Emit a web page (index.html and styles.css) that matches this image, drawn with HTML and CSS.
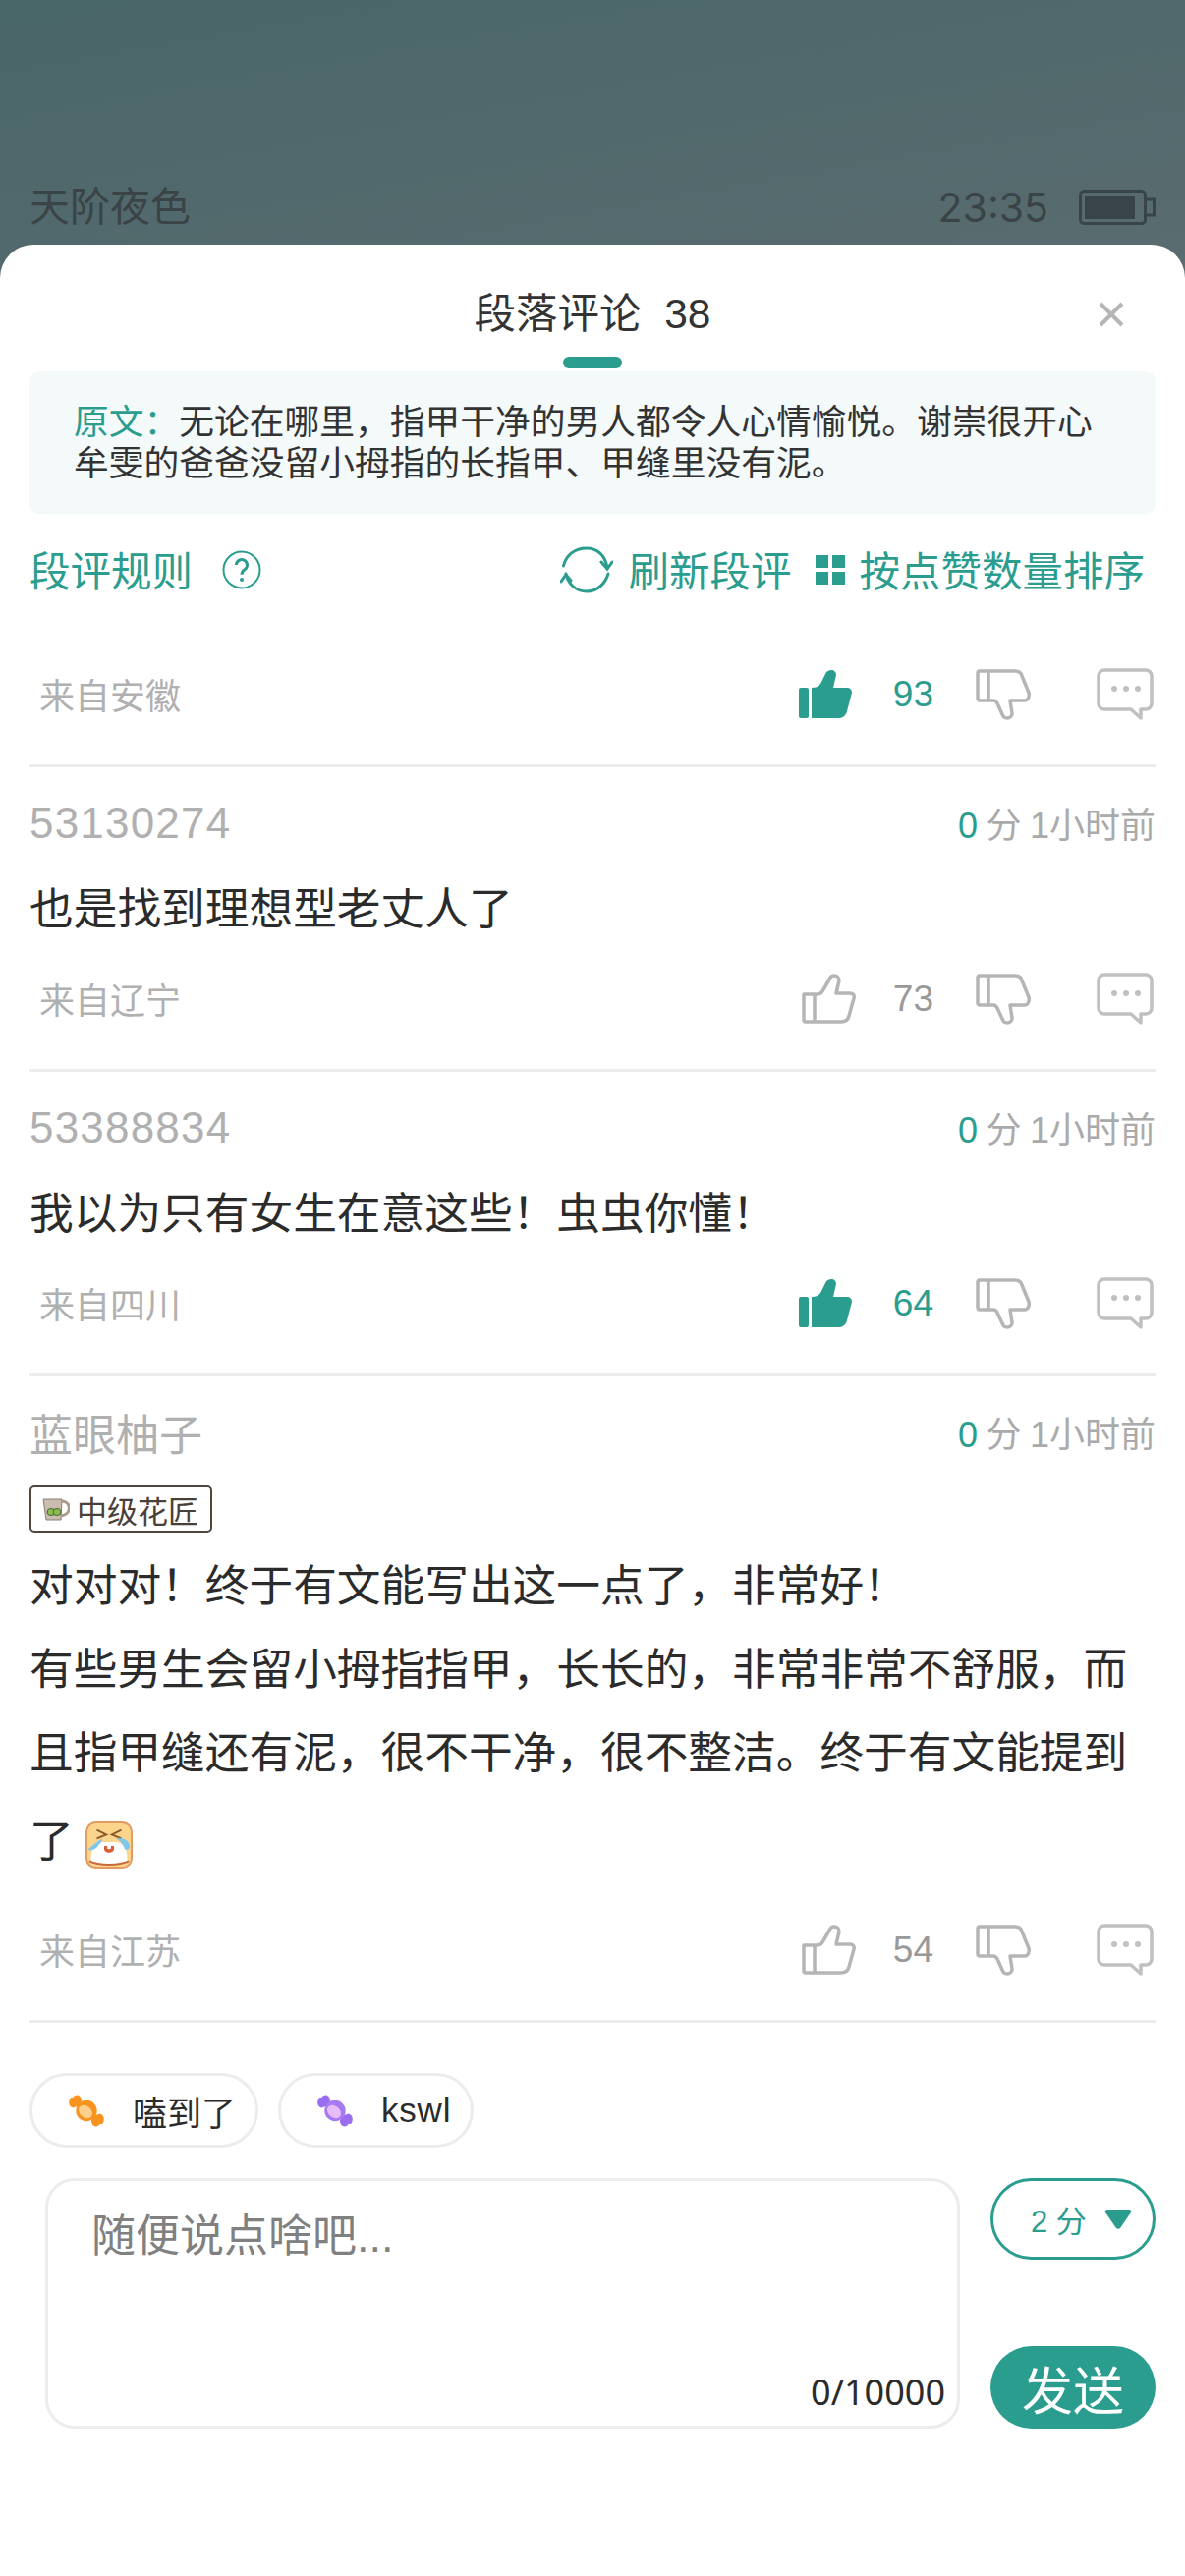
FILE: index.html
```html
<!DOCTYPE html>
<html lang="zh-CN">
<head>
    <meta charset="UTF-8">
    <title>段落评论</title>
    <link rel="stylesheet" href="styles.css">
</head>
<body>
    <svg class="sprites" width="0" height="0">
        <symbol id="thumb-fill" viewBox="0 0 60 52">
            <path d="M13 19c4 0 7-1 9-4L27 5c1-3 4-4 6-4 3 0 5 2 5 5l-3 13h14c3 0 5 2 5 5l-5 19c-1 4-4 7-8 7H13Z"/>
            <rect x="0" y="19" width="10" height="31" rx="2"/>
        </symbol>
        <symbol id="thumb-line" viewBox="0 0 60 52">
            <path d="M5 21h13c3 0 5-1 6-3L31 6c1-3 3-4 5-4 3 0 5 2 5 5l-3 13h14c3 0 5 2 4 5l-5 18c-1 4-4 6-8 6H7a2 2 0 0 1-2-2V21Z M16 21v28" fill="none" stroke-width="3.500" stroke-linejoin="round"/>
        </symbol>
        <symbol id="thumb-down" viewBox="0 0 60 52">
            <path d="M2 4a2 2 0 0 1 2-2h36c3 0 6 1 7 5l7 17c1 4-1 8-4 8H35l2 13c0 3-2 5-5 5-2 0-4-1-5-4l-5-11c-1-2-2-3-4-3H4a2 2 0 0 1-2-2Z M13 2v30" fill="none" stroke-width="3.500" stroke-linejoin="round"/>
        </symbol>
        <symbol id="speech" viewBox="0 0 60 54">
            <path d="M8 2h42a6 6 0 0 1 6 6v28a6 6 0 0 1-6 6h-5v9l-10-9H8a6 6 0 0 1-6-6V8a6 6 0 0 1 6-6Z" fill="none" stroke-width="3.500" stroke-linejoin="round"/>
            <circle cx="18" cy="21" r="3" stroke="none"/><circle cx="30" cy="21" r="3" stroke="none"/><circle cx="42" cy="21" r="3" stroke="none"/>
        </symbol>
    </svg>

    <header class="reader-bar">
        <span>天阶夜色</span>
        <div class="reader-status">
            <span class="clock">23:35</span>
            <svg width="78" height="36" viewBox="0 0 78 36">
                <rect x="1.500" y="1.500" width="66" height="33" rx="4" fill="none" stroke="#39444a" stroke-width="3"/>
                <rect x="6" y="6" width="51" height="24" fill="#39444a"/>
                <path d="M69 10h7.500v16H69" fill="none" stroke="#39444a" stroke-width="3"/>
            </svg>
        </div>
    </header>

    <main class="sheet">
        <div class="sheet-title">
            <h1>段落评论&nbsp;&nbsp;38</h1>
            <svg class="close" width="26" height="26" viewBox="0 0 26 26">
                <path d="M2 2l22 22M24 2L2 24" stroke="#b5b5b5" stroke-width="4"/>
            </svg>
        </div>
        <div class="tab-mark"></div>

        <p class="quote"><span class="quote-label">原文：</span>无论在哪里，指甲干净的男人都令人心情愉悦。谢崇很开心牟雯的爸爸没留小拇指的长指甲、甲缝里没有泥。</p>

        <div class="tools">
            <div class="tool">
                <span>段评规则</span>
                <svg width="40" height="40" viewBox="0 0 40 40">
                    <circle cx="20" cy="20" r="18.500" fill="none" stroke="#2a9d8f" stroke-width="2"/>
                    <path d="M14.500 15a5.500 5.500 0 1 1 8.500 4.700c-2 1.300-3 2.300-3 5" fill="none" stroke="#2a9d8f" stroke-width="3"/>
                    <circle cx="20" cy="30" r="2" fill="#2a9d8f"/>
                </svg>
            </div>
            <div class="tool-group">
                <div class="tool refresh">
                    <svg width="54" height="48" viewBox="0 0 54 48" fill="none" stroke="#2a9d8f" stroke-width="3" stroke-linecap="round">
                        <path d="M3.500 20C6 9 15 2 27 2c11 0 19 7 21 20"/>
                        <path d="M49 28c-3 10-11 18-22 18-11 0-19-8-21-18"/>
                        <path d="M42 16l6 7 5-7M1 36l5-7 5 6"/>
                    </svg>
                    <span>刷新段评</span>
                </div>
                <div class="tool sort">
                    <svg width="30" height="30" viewBox="0 0 30 30" fill="#2a9d8f">
                        <rect width="13" height="13"/><rect x="17" width="13" height="13"/>
                        <rect y="17" width="13" height="13"/><rect x="17" y="17" width="13" height="13"/>
                    </svg>
                    <span>按点赞数量排序</span>
                </div>
            </div>
        </div>

        <section class="comment first">
            <div class="comment-foot">
                <span class="place">来自安徽</span>
                <div class="actions">
                    <svg class="icon liked"><use href="#thumb-fill"/></svg><span class="count liked-count">93</span>
                    <svg class="icon dislike"><use href="#thumb-down"/></svg>
                    <svg class="icon-reply"><use href="#speech"/></svg>
                </div>
            </div>
        </section>

        <section class="comment">
            <div class="comment-head">
                <span class="author num">53130274</span>
                <span class="meta"><b>0</b> 分 1小时前</span>
            </div>
            <p class="comment-text">也是找到理想型老丈人了</p>
            <div class="comment-foot">
                <span class="place">来自辽宁</span>
                <div class="actions">
                    <svg class="icon unliked"><use href="#thumb-line"/></svg><span class="count">73</span>
                    <svg class="icon dislike"><use href="#thumb-down"/></svg>
                    <svg class="icon-reply"><use href="#speech"/></svg>
                </div>
            </div>
        </section>

        <section class="comment">
            <div class="comment-head">
                <span class="author num">53388834</span>
                <span class="meta"><b>0</b> 分 1小时前</span>
            </div>
            <p class="comment-text">我以为只有女生在意这些！虫虫你懂！</p>
            <div class="comment-foot">
                <span class="place">来自四川</span>
                <div class="actions">
                    <svg class="icon liked"><use href="#thumb-fill"/></svg><span class="count liked-count">64</span>
                    <svg class="icon dislike"><use href="#thumb-down"/></svg>
                    <svg class="icon-reply"><use href="#speech"/></svg>
                </div>
            </div>
        </section>

        <section class="comment">
            <div class="comment-head">
                <span class="author">蓝眼柚子</span>
                <span class="meta"><b>0</b> 分 1小时前</span>
            </div>
            <div class="badge">
                <svg width="28" height="24" viewBox="0 0 28 24">
                    <path d="M1 2h19l-1 21H4Z" fill="#cbbcb0" stroke="#8d7f75"/>
                    <path d="M20 4c10 0 10 14-1 15" fill="none" stroke="#a89a8f" stroke-width="3"/>
                    <ellipse cx="9" cy="15" rx="4" ry="3.500" fill="#8dbb52" stroke="#3f6a2a"/>
                    <ellipse cx="15" cy="15" rx="4" ry="3.500" fill="#8dbb52" stroke="#3f6a2a"/>
                </svg>
                <span>中级花匠</span>
            </div>
            <p class="comment-text long">对对对！终于有文能写出这一点了，非常好！<br>有些男生会留小拇指指甲，长长的，非常非常不舒服，而且指甲缝还有泥，很不干净，很不整洁。终于有文能提到了
                <svg class="sticker" width="48" height="48" viewBox="0 0 50 50">
                    <rect x="1" y="1" width="48" height="48" rx="10" fill="#fcd48c" stroke="#e29a62" stroke-width="2"/>
                    <path d="M6 42c-1-10 2-16 10-20l18 0c8 3 11 10 10 20-6 4-32 4-38 0Z" fill="#fff"/>
                    <path d="M4 42c10 5 32 5 42 0" fill="none" stroke="#c9683a" stroke-width="2"/>
                    <path d="M12 9l10 5-10 4M38 9l-10 5 10 4" fill="none" stroke="#8a5a2a" stroke-width="2"/>
                    <path d="M18 18c-5 2-10 8-16 12 6 2 10-2 12-5 2-2 4-4 4-7ZM32 18c4 2 8 6 9 10 1 3 5 3 6-1 0-4-3-8-8-9Z" fill="#7fc8ea"/>
                    <path d="M20 26h10c1 5-1 7-5 7s-6-2-5-7Z" fill="#dc5a34"/>
                    <path d="M23 26v2c0 2 4 2 4 0v-2" fill="#fff"/>
                </svg>
            </p>
            <div class="comment-foot">
                <span class="place">来自江苏</span>
                <div class="actions">
                    <svg class="icon unliked"><use href="#thumb-line"/></svg><span class="count">54</span>
                    <svg class="icon dislike"><use href="#thumb-down"/></svg>
                    <svg class="icon-reply"><use href="#speech"/></svg>
                </div>
            </div>
        </section>

        <div class="chips">
            <div class="chip">
                <svg width="38" height="33" viewBox="0 0 38 34">
                    <path d="M10 12L5 14C1 13 0 9 1 6c0-3 3-3 4-3 1-2 4-3 6-2 2 1 3 4 3 6ZM28 22l5-2c4 1 5 5 4 8 0 3-3 3-4 3-1 2-4 3-6 2-2-1-3-4-3-6Z" fill="#f7931e"/>
                    <circle cx="19" cy="17" r="11" fill="#f7931e"/>
                    <ellipse cx="18" cy="18" rx="6" ry="8" fill="#fcd08c" transform="rotate(-50 18 18)"/>
                </svg>
                <span>嗑到了</span>
            </div>
            <div class="chip">
                <svg width="38" height="33" viewBox="0 0 38 34">
                    <path d="M10 12L5 14C1 13 0 9 1 6c0-3 3-3 4-3 1-2 4-3 6-2 2 1 3 4 3 6ZM28 22l5-2c4 1 5 5 4 8 0 3-3 3-4 3-1 2-4 3-6 2-2-1-3-4-3-6Z" fill="#9a6cf0"/>
                    <circle cx="19" cy="17" r="11" fill="#a57af2"/>
                    <ellipse cx="18" cy="18" rx="6" ry="8" fill="#e8bcf8" transform="rotate(-50 18 18)"/>
                </svg>
                <span class="chip-latin">kswl</span>
            </div>
        </div>

        <div class="composer">
            <div class="input-box">
                <span class="placeholder">随便说点啥吧...</span>
                <span class="counter">0/10000</span>
            </div>
            <div class="composer-side">
                <div class="score-pick">
                    <span>2 分</span>
                    <svg width="28" height="22" viewBox="0 0 28 22"><path d="M3 1h22c2 0 3 2 2 3L16 20c-1 1-3 1-4 0L1 4C0 3 1 1 3 1Z" fill="#2a9d8f"/></svg>
                </div>
                <div class="send">发送</div>
            </div>
        </div>
    </main>
</body>
</html>
```

FILE: styles.css
```css
* {
    box-sizing: border-box;
}
body {
    margin: 0;
    width: 1206px;
    height: 2622px;
    overflow: hidden;
    background-color: #fff;
    font-family: "Liberation Sans", "Noto Sans CJK SC", sans-serif;
    color: #2b2b2b;
}
h1, p {
    margin: 0;
    font-weight: normal;
}
.sprites {
    position: absolute;
}
.reader-bar {
    height: 283px;
    padding: 0 30px 39px;
    display: flex;
    justify-content: space-between;
    align-items: flex-end;
    background: linear-gradient(170deg, #496669, #5a6c70);
    color: #3a4446;
    font-size: 41px;
    line-height: 66px;
}
.reader-status {
    height: 66px;
    display: flex;
    align-items: center;
    gap: 31px;
}
.clock {
    font-family: Inter, "Liberation Sans", sans-serif;
}
.sheet {
    position: relative;
    height: 2373px;
    margin-top: -34px;
    padding: 0 30px;
    background-color: #fff;
    border-radius: 34px 34px 0 0;
}
.sheet-title {
    position: relative;
    height: 114px;
    padding-top: 46px;
    text-align: center;
}
.sheet-title h1 {
    font-size: 42.5px;
    line-height: 50px;
    color: #333;
}
.close {
    position: absolute;
    right: 32px;
    top: 58px;
}
.tab-mark {
    width: 60px;
    height: 12px;
    margin: 0 auto;
    background-color: #2a9d8f;
    border-radius: 6px;
}
.quote {
    height: 145px;
    margin-top: 3px;
    padding: 31px 50px 0 45px;
    background-color: #f4f9f9;
    border-radius: 10px;
    font-size: 35.75px;
    line-height: 42px;
    color: #333;
}
.quote-label {
    color: #2a9d8f;
}
.tools {
    height: 114px;
    display: flex;
    justify-content: space-between;
    align-items: center;
    color: #2a9d8f;
    font-size: 41.5px;
}
.tool, .tool-group {
    display: flex;
    align-items: center;
}
.tool span {
    margin-bottom: 3px;
}
.tool {
    gap: 30px;
}
.tool-group {
    gap: 25px;
    padding-right: 11px;
}
.refresh {
    gap: 15px;
}
.sort {
    gap: 14px;
}
.comment {
    padding-top: 33px;
    border-bottom: 3px solid #ececec;
}
.comment.first {
    height: 144px;
    padding-top: 40px;
}
.comment.first .comment-foot {
    margin-top: 0;
}
.comment-head {
    height: 48px;
    display: flex;
    justify-content: space-between;
    align-items: center;
}
.author {
    font-size: 44px;
    color: #b0b0b0;
}
.author.num {
    letter-spacing: 1.2px;
}
.meta {
    padding-bottom: 3px;
    font-size: 36px;
    word-spacing: -1.5px;
    color: #aaa;
}
.meta b {
    font-weight: normal;
    color: #2a9d8f;
}
.comment-text {
    margin-top: 21px;
    font-size: 44.7px;
    line-height: 85px;
    color: #2b2b2b;
}
.comment-text.long {
    margin-top: 12px;
    margin-bottom: 26px;
}
.sticker {
    vertical-align: middle;
    margin: 27px 0;
}
.comment-foot {
    height: 60px;
    margin: 19px 0 41px;
    display: flex;
    justify-content: space-between;
    align-items: center;
}
.place {
    padding: 0 0 3px 10px;
    font-size: 36px;
    color: #b0b0b0;
}
.actions {
    display: flex;
    align-items: center;
    height: 60px;
}
.icon {
    width: 60px;
    height: 52px;
}
.liked {
    fill: #2a9d8f;
}
.unliked {
    stroke: #b5b5b5;
}
.dislike {
    margin-left: 43px;
    stroke: #b5b5b5;
}
.icon-reply {
    width: 60px;
    height: 54px;
    margin-left: 63px;
    stroke: #c0c0c0;
    fill: #c0c0c0;
}
.count {
    width: 77px;
    font-size: 37px;
    text-align: right;
    color: #999;
}
.liked-count {
    color: #2a9d8f;
}
.badge {
    width: 186px;
    height: 48px;
    margin-top: 30px;
    padding-left: 11px;
    border: 2px solid #50463e;
    border-radius: 5px;
    display: flex;
    align-items: center;
    gap: 7px;
    font-size: 31px;
    color: #4a403a;
}
.chips {
    display: flex;
    gap: 20px;
    margin-top: 51px;
}
.chip {
    height: 76px;
    padding: 0 20px 0 36px;
    border: 3px solid #ececec;
    border-radius: 38px;
    display: flex;
    align-items: center;
    gap: 28px;
    font-size: 35px;
    color: #2b2b2b;
}
.chip-latin {
    letter-spacing: 0.8px;
}
.composer {
    display: flex;
    justify-content: space-between;
    margin-top: 31px;
    padding-left: 16px;
}
.input-box {
    position: relative;
    width: 931px;
    height: 255px;
    padding: 27px 44px 0;
    border: 3px solid #ececec;
    border-radius: 30px;
}
.placeholder {
    font-size: 45px;
    line-height: 60px;
    color: #808080;
}
.counter {
    position: absolute;
    right: 12px;
    bottom: 12px;
    font-family: "Noto Sans", sans-serif;
    font-size: 36px;
    line-height: 44px;
    color: #2b2b2b;
}
.composer-side {
    width: 168px;
    height: 255px;
    display: flex;
    flex-direction: column;
    justify-content: space-between;
}
.score-pick {
    height: 83px;
    padding-left: 38px;
    border: 3px solid #2a9d8f;
    border-radius: 42px;
    display: flex;
    align-items: center;
    gap: 18px;
    color: #2a9d8f;
    font-size: 31px;
}
.send {
    height: 84px;
    border-radius: 42px;
    background-color: #2a9d8f;
    color: #fff;
    font-size: 52px;
    display: flex;
    align-items: center;
    justify-content: center;
}
```
